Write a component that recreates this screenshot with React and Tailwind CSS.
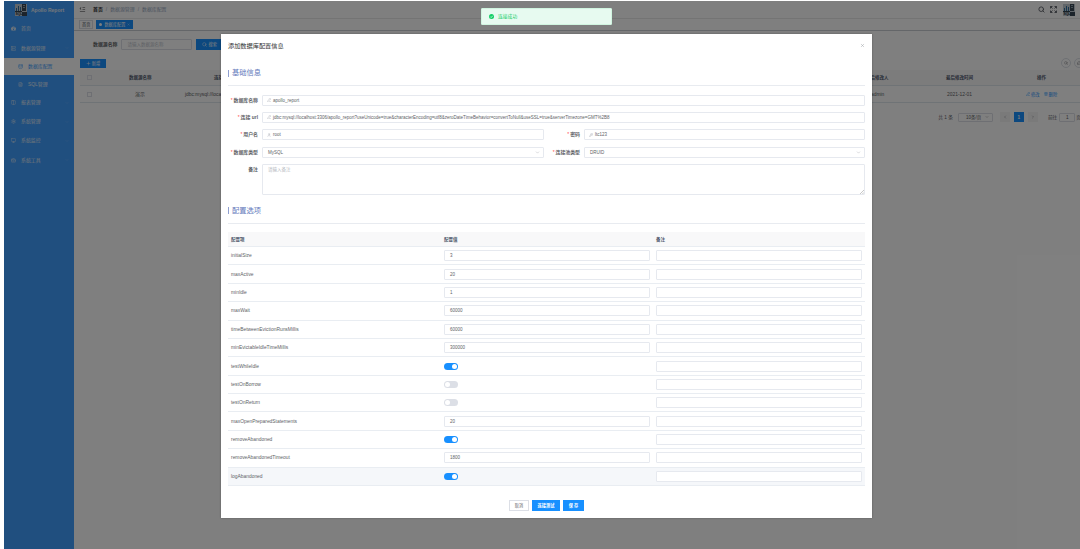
import { RiMenuFoldLine } from 'react-icons/ri'
import { FaTachometerAlt } from 'react-icons/fa'
import {
  Search, Plus, X, ChevronDown, ChevronLeft, ChevronRight, PencilLine, Trash2, User,
  RefreshCw, Database, Settings, Monitor, BriefcaseBusiness, FileText, Columns2, KeyRound, Server,
} from 'lucide-react'

const MENU = [
  { label: '首页', icon: FaTachometerAlt, cls: 'h-[19px] pl-[7px]' },
  { label: '数据源管理', icon: Server, cls: 'h-[20px] pl-[7px]', arrow: true },
  { label: '数据库配置', icon: Database, cls: 'h-[17px] bg-white text-[#409eff] pl-[14px]' },
  { label: 'SQL管理', icon: FileText, cls: 'h-[18px] pl-[14px]' },
  { label: '报表管理', icon: Columns2, cls: 'h-[19px] pl-[7px]', arrow: true },
  { label: '系统管理', icon: Settings, cls: 'h-[19px] pl-[7px]', arrow: true },
  { label: '系统监控', icon: Monitor, cls: 'h-[19.5px] pl-[7px]', arrow: true },
  { label: '系统工具', icon: BriefcaseBusiness, cls: 'h-[19.5px] pl-[7px]', arrow: true },
]

const OPTIONS = [
  { name: 'initialSize', value: '3' },
  { name: 'maxActive', value: '20' },
  { name: 'minIdle', value: '1' },
  { name: 'maxWait', value: '60000' },
  { name: 'timeBetweenEvictionRunsMillis', value: '60000' },
  { name: 'minEvictableIdleTimeMillis', value: '300000' },
  { name: 'testWhileIdle', value: true },
  { name: 'testOnBorrow', value: false },
  { name: 'testOnReturn', value: false },
  { name: 'maxOpenPreparedStatements', value: '20' },
  { name: 'removeAbandoned', value: true },
  { name: 'removeAbandonedTimeout', value: '1800' },
  { name: 'logAbandoned', value: true },
]

// bar chart over an "SQL" caption, server tower on the right
function Logo() {
  return (
    <svg viewBox="0 0 12 12" className="size-[12px] shrink-0">
      <rect width="12" height="12" fill="#c3ccd4" />
      <path d="M1 4h1v3H1zM3 2h1v5H3zM5 3h1v4H5z" fill="#2f6f9f" />
      <path d="M0 7h7v1H0z" fill="#34424f" />
      <path d="M7 0h4v7H7zM7 8h5v4H7z" fill="#3a4856" />
      <path d="M8 1h2v1H8zM8 3h2v1H8z" fill="#8fa0ae" />
      <text x="0.4" y="11.4" fontSize="3.4" fontWeight="bold" fill="#22303c">SQL</text>
    </svg>
  )
}

function FullscreenIcon({ className }) {
  return (
    <svg viewBox="0 0 14 14" fill="none" stroke="currentColor" strokeWidth="1.8" className={className}>
      <path d="M1 5V1h4M1 1l4 4M9 1h4v4M13 1L9 5M1 9v4h4M1 13l4-4M13 9v4H9M13 13L9 9" />
    </svg>
  )
}

function Sidebar() {
  return (
    <aside className="w-[70px] shrink-0 bg-[#409eff] text-[#e4edf6]">
      <div className="flex h-[18px] items-center gap-[4px] pl-[11px] text-[5px] font-bold whitespace-nowrap">
        <Logo />
        <span>Apollo Report</span>
      </div>
      <nav>
        {MENU.map(({ label, icon: Icon, cls, arrow }) => (
          <div key={label} className={`flex items-center gap-[5px] pr-[5px] ${cls}`}>
            <Icon className="size-[5px] shrink-0" />
            <span className="grow">{label}</span>
            {arrow && <ChevronDown className="size-[4px] opacity-40" />}
          </div>
        ))}
      </nav>
    </aside>
  )
}

function TopBar() {
  return (
    <header>
      <div className="flex h-[18px] items-center border-b border-[#e8e8e8] pr-[5px] pl-[5px]">
        <RiMenuFoldLine className="size-[7px] text-[#303133]" />
        <div className="ml-[7px] flex grow gap-[3px] text-[#97a8be]">
          <b className="text-[#303133]">首页</b>
          <span>/</span>
          <span>数据源管理</span>
          <span>/</span>
          <span>数据库配置</span>
        </div>
        <Search strokeWidth={3} className="size-[7px] text-[#5a5e66]" />
        <FullscreenIcon className="ml-[5px] size-[7px] text-[#5a5e66]" />
        <div className="ml-[6px]"><Logo /></div>
      </div>
      <div className="flex h-[12px] items-center gap-[3px] border-b border-[#c8ccd2] pl-[5px] text-[4.2px]">
        <span className="flex h-[9px] items-center border border-[#d8dce5] px-[2px] text-[#495060]">首页</span>
        <span className="flex h-[9px] items-center gap-[2px] bg-[#1890ff] px-[3px] text-white">
          <i className="size-[3px] rounded-full bg-white" />
          数据库配置
          <X className="size-[3px]" />
        </span>
      </div>
    </header>
  )
}

function ListPage() {
  return (
    <main className="pl-[6px]">
      <div className="flex h-[26px] items-center">
        <b className="ml-[13px] text-[#606266]">数据源名称</b>
        <div className="ml-[4px] flex h-[11px] w-[71px] items-center rounded-[1px] border border-[#dcdfe6] pl-[5px] text-[4.5px] text-[#c0c4cc]">
          请输入数据源名称
        </div>
        <button className="ml-[4px] flex h-[11px] w-[30px] items-center gap-[1px] bg-[#1890ff] pl-[6px] text-[4.2px] text-white">
          <Search className="size-[5px]" />
          搜索
        </button>
      </div>
      <div className="flex h-[12px] items-center justify-between">
        <button className="flex h-[9px] w-[26px] items-center justify-center gap-[1px] bg-[#1890ff] text-[4.2px] text-white">
          <Plus className="size-[5px]" />
          新增
        </button>
        <div className="flex gap-[3px] text-[#606266]">
          <span className="flex size-[10px] items-center justify-center rounded-full border border-[#dcdfe6]"><Search className="size-[4px]" /></span>
          <span className="-mr-[4px] flex size-[10px] items-center justify-center rounded-full border border-[#dcdfe6]"><RefreshCw className="size-[4px]" /></span>
        </div>
      </div>
      <div className="mt-[1px] flex h-[16px] items-center border-b border-[#dfe6ec] bg-[#f8f8f9] text-[4.5px] text-[#515a6e]">
        <span className="ml-[7px] size-[5px] shrink-0 border border-[#dcdfe6]" />
        <b className="ml-[37px] w-[85px] shrink-0">数据源名称</b>
        <b className="w-[652px] shrink-0">连接</b>
        <b className="w-[80px] shrink-0">最后修改人</b>
        <b className="w-[91px] shrink-0">最后修改时间</b>
        <b className="shrink-0">操作</b>
      </div>
      <div className="flex h-[17px] items-center border-b border-[#dfe6ec] text-[#606266]">
        <span className="ml-[7px] size-[5px] shrink-0 border border-[#dcdfe6]" />
        <span className="ml-[43px] w-[50px] shrink-0">演示</span>
        <span className="w-[686px] shrink-0">jdbc:mysql://localhost</span>
        <span className="w-[76px] shrink-0">admin</span>
        <span className="w-[79px] shrink-0">2021-12-01</span>
        <span className="flex shrink-0 items-center gap-[1px] text-[4.3px] text-[#1890ff]">
          <PencilLine className="size-[4px]" />
          修改
          <Trash2 className="ml-[3px] size-[4px]" />
          删除
        </span>
      </div>
      <div className="mt-[8px] -mr-px flex h-[12px] items-center justify-end text-[4.7px] text-[#606266]">
        <span>共 1 条</span>
        <span className="ml-[5px] flex h-[9px] w-[35px] items-center justify-between rounded-[1px] border border-[#dcdfe6] pr-[3px] pl-[7px] text-[4.5px]">
          10条/页
          <ChevronDown className="size-[4px]" />
        </span>
        <span className="ml-[7px] flex size-[10px] items-center justify-center bg-[#f4f4f5]"><ChevronLeft className="size-[4px]" /></span>
        <b className="ml-[4px] flex size-[10px] items-center justify-center bg-[#1890ff] text-white">1</b>
        <span className="ml-[4px] flex size-[10px] items-center justify-center bg-[#f4f4f5]"><ChevronRight className="size-[4px]" /></span>
        <span className="ml-[10px]">前往</span>
        <span className="ml-[2px] flex h-[9px] w-[16px] items-center justify-center rounded-[1px] border border-[#dcdfe6]">1</span>
        <span className="ml-[1px]">页</span>
      </div>
    </main>
  )
}

function SectionTitle({ children }) {
  return (
    <h3 className="flex items-center gap-[3px] text-[7.25px] leading-[10px] text-[#6379bb]">
      <i className="h-[7px] w-px bg-[#8f9fd0]" />
      {children}
    </h3>
  )
}

function Field({ label, required, icon: Icon, select, children, cls = 'grow', labelCls = 'w-[30px]' }) {
  return (
    <div className={`flex items-center ${cls}`}>
      <div className={`shrink-0 text-right font-bold text-[#606266] ${labelCls}`}>
        {required && <span className="mr-[1px] font-normal text-[#ff4949]">*</span>}
        {label}
      </div>
      <div className={`ml-[4px] flex h-[11px] grow items-center rounded-[1px] border border-[#e6e9ef] text-[4.5px] text-[#606266] ${select ? 'pl-[5px]' : 'pl-[4px]'}`}>
        {Icon && <Icon className="mr-[2px] size-[4px] text-[#a4a8b0]" />}
        <span className="grow whitespace-nowrap">{children}</span>
        {select && <ChevronDown className="mr-[3px] size-[5px] text-[#a8abb2]" />}
      </div>
    </div>
  )
}

function Toggle({ on }) {
  return (
    <span className={`flex h-[7px] w-[14px] items-center rounded-full px-[1px] ${on ? 'justify-end bg-[#1890ff]' : 'bg-[#dcdfe6]'}`}>
      <i className="size-[5px] rounded-full bg-white" />
    </span>
  )
}

function OptionRow({ name, value, hovered }) {
  return (
    <div className={`flex h-[18.38px] items-center border-b border-[#e9edf2] pr-[3px] pl-[3px] ${hovered ? 'bg-[#f5f7fa]' : ''}`}>
      <span className="w-[213px]">{name}</span>
      <div className="w-[212px]">
        {typeof value === 'boolean' ? (
          <Toggle on={value} />
        ) : (
          <div className="flex h-[11px] w-[206px] items-center rounded-[1px] border border-[#e6e9ef] bg-white pl-[5px] text-[4.5px]">{value}</div>
        )}
      </div>
      <div className="h-[11px] grow rounded-[1px] border border-[#e6e9ef] bg-white" />
    </div>
  )
}

function ConfigDialog() {
  return (
    <section className="flex h-[484px] w-[651px] flex-col bg-white px-[7px] text-[#606266] shadow-[0_0_2px_rgba(0,0,0,0.3)]">
      <div className="mt-[6px] flex h-[10px] items-center justify-between text-[6.2px] text-[#303133]">
        添加数据库配置信息
        <X className="size-[5px] text-[#909399]" />
      </div>
      <div className="mt-[18px]"><SectionTitle>基础信息</SectionTitle></div>
      <div className="mt-[7px] border-b border-[#e8ebf0]" />

      <div className="mt-[8.5px] flex flex-col gap-[6.4px]">
        <Field label="数据库名称" required icon={PencilLine}>apollo_report</Field>
        <Field label="连接 url" required icon={PencilLine}>
          jdbc:mysql://localhost:3306/apollo_report?useUnicode=true&amp;characterEncoding=utf8&amp;zeroDateTimeBehavior=convertToNull&amp;useSSL=true&amp;serverTimezone=GMT%2B8
        </Field>
        <div className="flex">
          <Field label="用户名" required icon={User} cls="w-[316px]">root</Field>
          <Field label="密码" required icon={KeyRound} labelCls="w-[36px]">ltc123</Field>
        </div>
        <div className="flex">
          <Field label="数据库类型" required select cls="w-[316px]">MySQL</Field>
          <Field label="连接池类型" required select labelCls="w-[36px]">DRUID</Field>
        </div>
        <div className="flex">
          <b className="w-[30px] pt-[2px] text-right">备注</b>
          <div className="ml-[4px] flex h-[31px] grow items-start justify-between rounded-[1px] border border-[#e6e9ef] pt-px pl-[5px] text-[4.5px] text-[#b4b8c0]">
            请输入备注
            <svg viewBox="0 0 5 5" className="size-[4px] self-end"><path d="M0 5L5 0M3 5L5 3" stroke="#888" strokeWidth=".6" /></svg>
          </div>
        </div>
      </div>

      <div className="mt-[10.5px]"><SectionTitle>配置选项</SectionTitle></div>
      <div className="mt-[7.5px] border-b border-[#e8ebf0]" />

      <div className="mt-[8px]">
        <div className="flex h-[15px] items-center border-b border-[#e9edf2] bg-[#f8f8f9] pl-[3px] text-[4.5px] font-bold text-[#515a6e]">
          <span className="w-[213px]">配置项</span>
          <span className="w-[212px]">配置值</span>
          <span>备注</span>
        </div>
        {OPTIONS.map((o) => (
          <OptionRow key={o.name} name={o.name} value={o.value} hovered={o.name === 'logAbandoned'} />
        ))}
      </div>

      <div className="mt-[14px] flex justify-center gap-[3px] text-[4.2px]">
        <button className="h-[11px] w-[20px] border border-[#dcdfe6]">取消</button>
        <button className="h-[11px] w-[28px] bg-[#1890ff] font-bold text-white">连接测试</button>
        <button className="h-[11px] w-[21px] bg-[#1890ff] font-bold text-white">保 存</button>
      </div>
    </section>
  )
}

export default function App() {
  return (
    <div className="relative h-[549px] w-[1080px] overflow-hidden bg-white pt-px pl-[4px] font-['Liberation_Sans','Noto_Sans_CJK_SC',sans-serif] text-[4.9px] leading-[7px]">
      <div className="flex h-[548px] w-[1076px] overflow-hidden">
        <Sidebar />
        <div className="w-[1006px] shrink-0 overflow-hidden">
          <TopBar />
          <ListPage />
        </div>
      </div>
      <div className="absolute top-px left-[4px] flex h-[548px] w-[1076px] items-start bg-black/50 pt-[33px] pl-[217px]">
        <ConfigDialog />
      </div>
      <div className="absolute top-[8px] left-[481px] flex h-[17px] w-[131px] items-center gap-[4px] rounded-[1px] border border-[#d0f5e0] bg-[#e7faf0] pl-[7px] text-[4.8px] text-[#13ce66]">
        <svg viewBox="0 0 10 10" className="size-[5px]">
          <circle cx="5" cy="5" r="5" fill="#13ce66" />
          <path d="M2.6 5.2l1.8 1.8 3.2-3.6" fill="none" stroke="#fff" strokeWidth="1.3" />
        </svg>
        连接成功
      </div>
    </div>
  )
}
